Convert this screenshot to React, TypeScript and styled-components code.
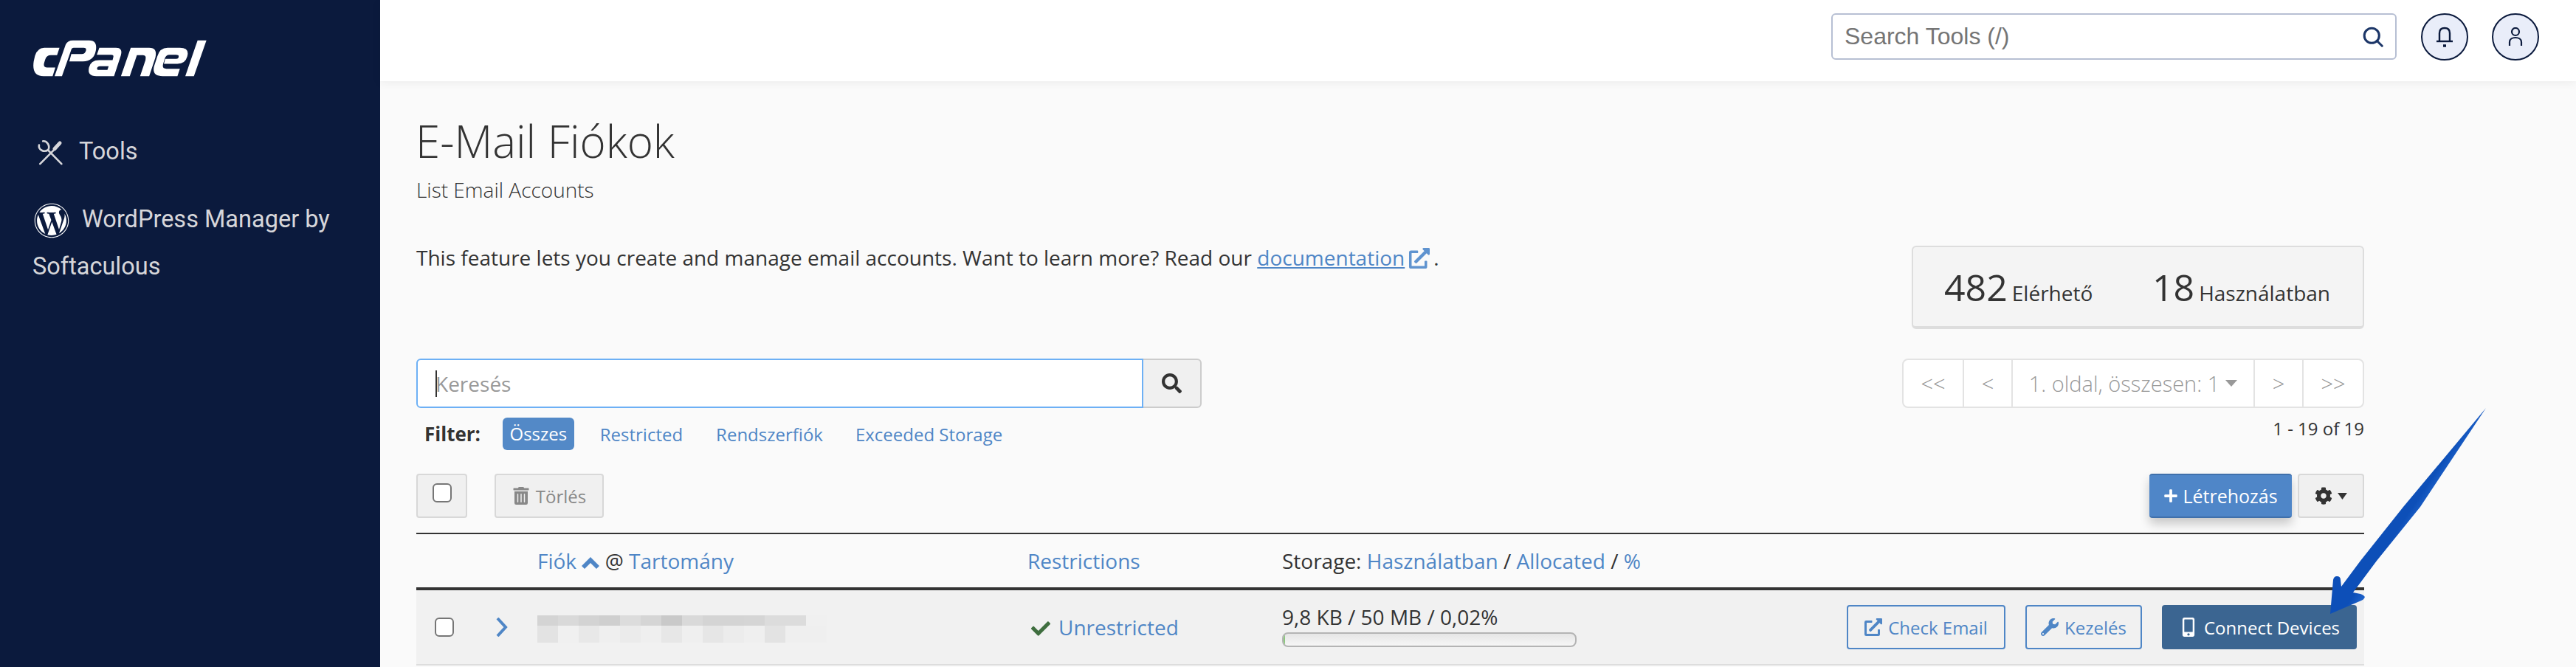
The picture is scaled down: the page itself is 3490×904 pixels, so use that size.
import React from "react";
import styled, { createGlobalStyle } from "styled-components";
import { FaWordpress } from "react-icons/fa";
import { FaCheck, FaCog, FaExternalLinkAlt, FaMobileAlt, FaPlus, FaSearch, FaTrashAlt, FaWrench } from "react-icons/fa";

const Global = createGlobalStyle`
  html, body { margin: 0; padding: 0; height: 100%; overflow: hidden; background: #fafafa; }
  #root { height: 100%; }
  * { box-sizing: border-box; }
`;
const OS = `"Open Sans", "Liberation Sans", sans-serif`;
const BLUE = "#4f86c6";
const Page = styled.div`
  position: relative; display: flex; width: 3490px; height: 904px; overflow: hidden;
  font-family: ${OS}; font-size: 28px; color: #333; background: #fafafa;
`;
const Sidebar = styled.aside`
  width: 515px; flex: none; background: #0b1a3d; padding: 53px 44px 0; font-family: Roboto, sans-serif;
`;
const Logo = styled.div`height: 52px; margin-bottom: 64px; svg { display: block; }`;
const NavItem = styled.div<{ $lh: number; $mt?: number }>`
  color: #d6d6da; font-size: 32.5px; line-height: ${p => p.$lh}px; margin-top: ${p => p.$mt ?? 0}px;
  svg { vertical-align: middle; }
`;
const ToolsIcon = styled.svg`margin: 0 21px 0 6px;`;
const WpIcon = styled(FaWordpress)`margin: 0 17px 0 2px; color: #fff;`;
const Main = styled.main`flex: 1; min-width: 0; display: flex; flex-direction: column;`;
const TopBar = styled.header`
  height: 110px; flex: none; background: #fff; box-shadow: 0 2px 12px rgba(0,0,0,.06);
  display: flex; align-items: flex-start; padding: 18px 0 0 1966px; position: relative; z-index: 1;
`;
const ToolSearch = styled.div`
  width: 766px; height: 63px; border: 2px solid #b7bfd3; border-radius: 6px; display: flex; align-items: center;
  justify-content: space-between; padding: 0 16px; font-family: "Liberation Sans", sans-serif; font-size: 32px; color: #757575; margin-right: 33px;
`;
const Round = styled.div`
  width: 64px; height: 64px; border-radius: 50%; border: 2px solid #0b1a3d; background: #e9edf9; display: flex; align-items: center; justify-content: center; margin-right: 32px;
`;
const Content = styled.div`width: 2639px; margin-left: 49px; flex: 1;`;
const Title = styled.h1`margin: 40px 0 0 -1px; font-weight: 300; font-size: 60px; line-height: 82px; color: #333;`;
const Sub = styled.div`font-weight: 300; font-size: 28px; line-height: 38px; margin-top: 6px;`;
const DescRow = styled.div`display: flex; justify-content: space-between; align-items: flex-start; height: 113px; margin-top: 57px;`;
const Desc = styled.p`margin: -3px 0 0; line-height: 38px;`;
const A = styled.a`color: ${BLUE};`;
const LinkA = styled.a`color: ${BLUE}; text-decoration: underline;`;
const ExtIcon = styled(FaExternalLinkAlt)`color: #5f93cf; width: 28px; height: 28px; margin: 0 5px 0 6px; vertical-align: -4px;`;
const Stats = styled.div`
  width: 613px; height: 113px; background: #f4f4f4; border: 2px solid #ddd; border-bottom-width: 4px; border-radius: 6px;
  display: flex; align-items: center; justify-content: space-between; padding: 0 44px 0 42px; font-size: 28px;
  b { font-weight: 400; font-size: 50px; margin-right: 6px; }
`;
const SearchRow = styled.div`display: flex; justify-content: space-between; margin-top: 40px; height: 67px;`;
const InputGroup = styled.div`display: flex;`;
const SearchInput = styled.div`
  width: 985px; height: 67px; background: #fff; border: 2px solid #6db0f5; border-radius: 6px 0 0 6px; display: flex; align-items: center; padding-left: 24px; color: #999; font-size: 28px;
  i { display: block; width: 2px; height: 36px; background: #333; margin-right: -2px; }
`;
const SearchBtn = styled.div`
  width: 79px; height: 67px; background: #f0f0f0; border: 2px solid #ccc; border-left: 0; border-radius: 0 6px 6px 0; display: flex; align-items: center; justify-content: center; color: #333;
`;
const Pager = styled.div`display: flex; width: 626px; height: 67px; border: 2px solid #e3e3e3; border-radius: 8px; background: #fff; color: #999; font-size: 29px; font-weight: 300;`;
const PageCell = styled.div<{ $w: number; $last?: boolean }>`
  width: ${p => p.$w}px; flex: none; display: flex; align-items: center; justify-content: center; gap: 8px; ${p => !p.$last && "border-right: 2px solid #e3e3e3;"}
`;
const FilterBar = styled.div`display: flex; align-items: center; height: 44px; margin-top: 13px; font-size: 24px; padding-left: 11px; position: relative;`;
const FilterLabel = styled.b`font-weight: 700; font-size: 26px; color: #333; margin-right: 30px;`;
const Chip = styled.span<{ $on?: boolean; $ml: number }>`
  margin-left: ${p => p.$ml}px; color: ${p => p.$on ? "#fff" : BLUE};
  ${p => p.$on && "background:#5389c7;border-radius:6px;padding:0 9.5px;height:44px;line-height:44px;"}
`;
const Count = styled.div`position: absolute; right: 0; top: 0; font-size: 24px; line-height: 30px; color: #333;`;
const ActionRow = styled.div`display: flex; align-items: flex-start; height: 60px; margin-top: 32px;`;
const GrayBtn = styled.div<{ $w: number; $mr?: number; $ml?: number; $dark?: boolean }>`
  width: ${p => p.$w}px; height: 60px; background: #f0f0f0; border: 2px solid #d8d8d8; border-radius: 4px; display: flex; align-items: center; justify-content: center; gap: ${p => p.$dark ? 6 : 8}px; color: ${p => p.$dark ? "#333" : "#888"}; font-size: 24px; margin-right: ${p => p.$mr ?? 0}px; margin-left: ${p => p.$ml ?? 0}px;
`;
const Box = styled.span<{ $up?: boolean }>`display:block;flex:none;width:26px;height:26px;border:2px solid #767676;border-radius:6px;background:#fff;margin-top:${p => p.$up ? -8 : 0}px;`;
const Create = styled.div`
  margin-left: auto; width: 193px; height: 60px; background: #4f86c8; border-top: 2px solid #3f70ab; border-bottom: 2px solid #3f70ab; border-radius: 4px; color: #fff; font-size: 25px; font-weight: 400;
  display: flex; align-items: center; justify-content: center; gap: 6px; box-shadow: 0 8px 14px rgba(0,0,0,.2);
`;
const Table = styled.div`margin-top: 20px; border-top: 2px solid #333;`;
const HeadRow = styled.div`height: 72px; border-bottom: 4px solid #333; display: grid; grid-template-columns: 828px 345px 1fr; align-items: center; box-sizing: content-box; font-size: 28px;`;
const HeadCell = styled.div<{ $pl?: number }>`padding-left: ${p => p.$pl ?? 0}px;`;
const Row = styled.div`height: 102px; background: #f1f1f1; border-bottom: 2px solid #ddd; display: grid; grid-template-columns: 828px 345px 1fr auto; align-items: center; padding-right: 10px;`;
const AccountCell = styled.div`display: flex; align-items: center; padding-left: 25px;`;
const Chevron = styled.svg`margin-left: 57px; flex: none;`;
const Pixels = styled.div`display:grid; grid-template-columns: repeat(14, 28px); grid-template-rows: 14px 23px; margin: 5px 0 0 40px;`;
const Px = styled.span<{ $c: string }>`background:${p => p.$c};`;
const CheckIcon = styled(FaCheck)`color: #3f6e3f; width: 28px; height: 26px; vertical-align: -4px; margin: 0 10px 0 4px;`;
const Prog = styled.div`
  width: 399px; height: 20px; border: 2px solid #b4b4b4; border-radius: 8px; background: linear-gradient(#e6e6e6, #f6f6f6); position: relative; overflow: hidden;
  &::before { content: ""; position: absolute; left: 0; top: 0; bottom: 0; width: 2px; background: #8cc97e; }
`;
const StorageCell = styled.div`display:flex;flex-direction:column;gap:4px;line-height:34px;margin-top:-4px;`;
const Buttons = styled.div`display:flex;justify-content:flex-end;`;
const RowBtn = styled.div<{ $w: number; $fill?: boolean; $ml: number }>`
  width: ${p => p.$w}px; height: 60px; border-radius: 4px; margin-left: ${p => p.$ml}px; display:flex;align-items:center;justify-content:center;gap:8px;font-size:24px;
  ${p => p.$fill ? "background:#3b6591;color:#fff;" : `border:2px solid ${BLUE};color:${BLUE};`}
`;
const Arrow = styled.svg`position: absolute; left: 3140px; top: 540px; width: 240px; height: 300px; pointer-events: none; z-index: 2;`;

const row1 = ["#d4d4d4","#d9d9d9","#d3d3d3","#cfcfcf","#dcdcdc","#d5d5d5","#c9c9c9","#d9d9d9","#d4d4d4","#d4d4d4","#d5d5d5","#dcdcdc","#dcdcdc","#f0f0f0"];
const row2 = ["#e3e3e3","#f0f0f0","#e8e8e8","#efefef","#ebebeb","#efefef","#e7e7e7","#efefef","#e6e6e6","#ececec","#efefef","#e3e3e3","#efefef","#efefef"];

export default function App() {
  return (
    <Page>
      <Global />
      <Sidebar>
        <Logo>
          <svg width="238" height="52" viewBox="40 40 715 155" fill="#fff" fillRule="evenodd" aria-label="cPanel">
            <path d="M150 75 L88 75 Q60 75 50 108 L45 130 Q36 190 85 190 L122 190 L133 155 L100 155 Q82 155 88 135 L92 122 Q97 105 115 105 L140 105 Z" />
            <path d="M130 190 L175 62 Q183 45 205 45 L270 45 Q305 45 298 85 Q290 130 245 130 L190 130 L198 100 L240 100 Q255 100 258 85 Q260 75 248 75 L208 75 Q200 75 197 85 L160 190 Z" />
            <path d="M312 75 L380 75 Q408 75 400 105 L372 190 L300 190 Q262 190 270 155 Q277 125 312 125 L366 125 L369 113 Q372 103 360 103 L302 103 Z M315 150 Q305 150 303 158 Q302 165 310 165 L345 165 L350 150 Z" />
            <path d="M400 190 L440 75 L515 75 Q550 75 540 115 L515 190 L478 190 L500 125 Q505 105 490 105 L465 105 L436 190 Z" />
            <path d="M590 75 L640 75 Q680 75 670 110 Q662 140 630 140 L575 140 L580 120 L625 120 Q635 120 635 110 Q636 103 625 103 L598 103 Q582 103 578 120 L572 140 Q566 160 585 160 L640 160 L630 190 L570 190 Q525 190 535 150 L548 110 Q558 75 590 75 Z" />
            <path d="M712 45 L748 45 L697 190 L662 190 Z" />
          </svg>
        </Logo>
        <NavItem $lh={72}>
          <ToolsIcon width="36" height="36" viewBox="55 45 110 110" fill="none" stroke="#d6d6da" strokeWidth="8" strokeLinecap="round">
            <path d="M157 146 L100 88" />
            <path d="M64 68 C60 88 84 100 102 88 C110 72 98 50 80 52" />
            <path d="M68 146 L128 86" />
            <path d="M128 84 L150 60" strokeWidth="15" />
          </ToolsIcon>
          Tools
        </NavItem>
        <NavItem $lh={64} $mt={24}>
          <WpIcon size={48} />
          WordPress Manager by<br />Softaculous
        </NavItem>
      </Sidebar>
      <Main>
        <TopBar>
          <ToolSearch>
            Search Tools (/)
            <svg width="28" height="28" viewBox="0 0 32 32" fill="none" stroke="#1c3668" strokeWidth="3.5"><circle cx="14" cy="14" r="11.5" /><path d="M22 22 L30 30" strokeLinecap="round" /></svg>
          </ToolSearch>
          <Round>
            <svg width="24" height="28" viewBox="0 0 24 28" fill="none" stroke="#0b1a3d" strokeWidth="2.4"><path d="M5 19 L5 9 C5 4 8 2 12 2 C16 2 19 4 19 9 L19 19" /><path d="M1 20 L23 20" /><path d="M10 26 L14 26" strokeWidth="3.5" /></svg>
          </Round>
          <Round>
            <svg width="20" height="26" viewBox="0 0 20 26" fill="none" stroke="#0b1a3d" strokeWidth="2.2"><circle cx="10" cy="6" r="5" /><path d="M2 25 L2 20 C2 16 6 14 10 14 C14 14 18 16 18 20 L18 25" /></svg>
          </Round>
        </TopBar>
        <Content>
          <Title>E-Mail Fiókok</Title>
          <Sub>List Email Accounts</Sub>
          <DescRow>
            <Desc>This feature lets you create and manage email accounts. Want to learn more? Read our <LinkA href="#">documentation</LinkA><ExtIcon />.</Desc>
            <Stats>
              <span><b>482</b>Elérhető</span>
              <span><b>18</b>Használatban</span>
            </Stats>
          </DescRow>
          <SearchRow>
            <InputGroup>
              <SearchInput><i />Keresés</SearchInput>
              <SearchBtn><FaSearch size={27} /></SearchBtn>
            </InputGroup>
            <Pager>
              <PageCell $w={82}>&lt;&lt;</PageCell>
              <PageCell $w={66}>&lt;</PageCell>
              <PageCell $w={328}>1. oldal, összesen: 1<svg width="16" height="9" viewBox="0 0 16 9" fill="#999"><path d="M0 0 H16 L8 9Z" /></svg></PageCell>
              <PageCell $w={66}>&gt;</PageCell>
              <PageCell $w={80} $last>&gt;&gt;</PageCell>
            </Pager>
          </SearchRow>
          <FilterBar>
            <FilterLabel>Filter:</FilterLabel>
            <Chip $on $ml={0}>Összes</Chip>
            <Chip $ml={35}>Restricted</Chip>
            <Chip $ml={45}>Rendszerfiók</Chip>
            <Chip $ml={44}>Exceeded Storage</Chip>
            <Count>1 - 19 of 19</Count>
          </FilterBar>
          <ActionRow>
            <GrayBtn $w={69} $mr={37}><Box $up /></GrayBtn>
            <GrayBtn $w={148}>
              <FaTrashAlt size={24} />
              Törlés
            </GrayBtn>
            <Create>
              <FaPlus size={20} />
              Létrehozás
            </Create>
            <GrayBtn $w={90} $ml={8} $dark>
              <FaCog size={24} />
              <svg width="15" height="11" viewBox="0 0 16 12" fill="#333"><path d="M1 1 H15 L8 11Z" /></svg>
            </GrayBtn>
          </ActionRow>
          <Table>
            <HeadRow>
              <HeadCell $pl={164}><A>Fiók</A> <svg width="24" height="16" viewBox="0 0 24 16" fill={BLUE}><path d="M12 0 L24 12 L20 16 L12 8 L4 16 L0 12Z" /></svg> @ <A>Tartomány</A></HeadCell>
              <HeadCell><A>Restrictions</A></HeadCell>
              <HeadCell>Storage: <A>Használatban</A> / <A>Allocated</A> / <A>%</A></HeadCell>
            </HeadRow>
            <Row>
              <AccountCell>
                <Box />
                <Chevron width="16" height="26" viewBox="0 0 16 26" fill="none" stroke={BLUE} strokeWidth="4"><path d="M2 1 L13 13 L2 25" /></Chevron>
                <Pixels>
                  {row1.concat(row2).map((c, i) => <Px key={i} $c={c} />)}
                </Pixels>
              </AccountCell>
              <div>
                <CheckIcon />
                <A>Unrestricted</A>
              </div>
              <StorageCell>
                9,8 KB / 50 MB / 0,02%
                <Prog />
              </StorageCell>
              <Buttons>
                <RowBtn $w={215} $ml={0}><FaExternalLinkAlt size={24} />Check Email</RowBtn>
                <RowBtn $w={158} $ml={27}><FaWrench size={24} />Kezelés</RowBtn>
                <RowBtn $w={264} $ml={27} $fill><FaMobileAlt size={26} />Connect Devices</RowBtn>
              </Buttons>
            </Row>
          </Table>
        </Content>
      </Main>
      <Arrow viewBox="3140 540 240 300">
        <defs><linearGradient id="g" x1="3240" y1="730" x2="3270" y2="750" gradientUnits="userSpaceOnUse"><stop offset="0" stopColor="#0d4fb8" /><stop offset=".5" stopColor="#2468cf" /><stop offset="1" stopColor="#0f52b6" /></linearGradient></defs>
        <path d="M3368 553 L3279 687 L3220 760 L3188 803 L3198 805 Q3206 808 3203 811 Q3202 813 3199 814 L3157 832 L3161 786 Q3162 781 3166 781 Q3171 781 3171 786 L3172 795 L3198 760 L3256 687 Z" fill="url(#g)" />
      </Arrow>
    </Page>
  );
}
